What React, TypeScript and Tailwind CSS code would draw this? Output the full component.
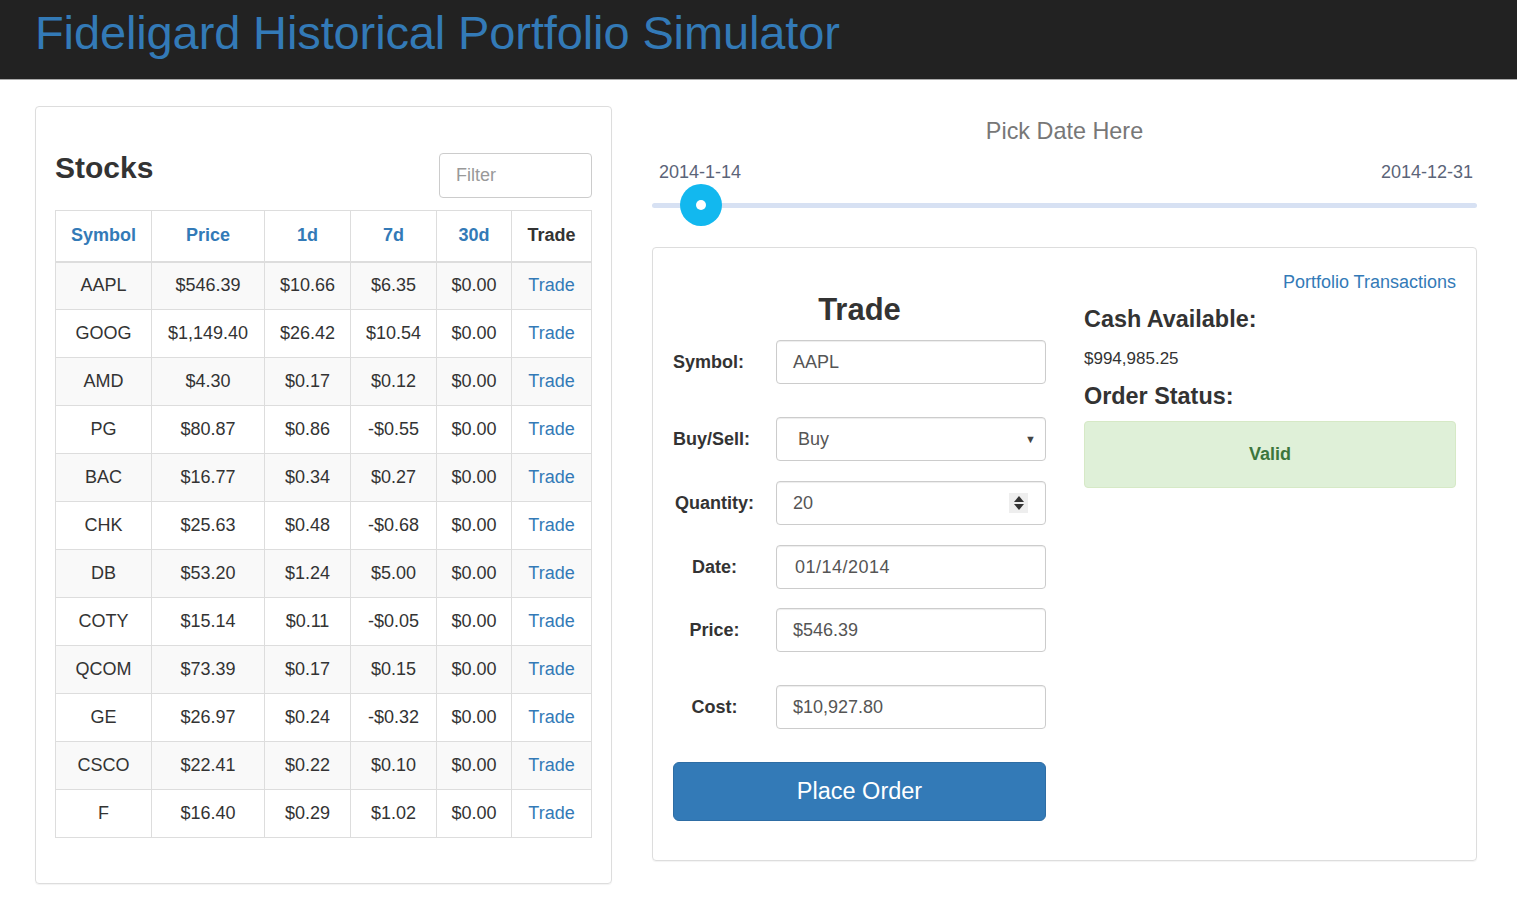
import React from "react";

type Stock = {
  symbol: string;
  price: string;
  d1: string;
  d7: string;
  d30: string;
};

const stocks: Stock[] = [
  { symbol: "AAPL", price: "$546.39", d1: "$10.66", d7: "$6.35", d30: "$0.00" },
  { symbol: "GOOG", price: "$1,149.40", d1: "$26.42", d7: "$10.54", d30: "$0.00" },
  { symbol: "AMD", price: "$4.30", d1: "$0.17", d7: "$0.12", d30: "$0.00" },
  { symbol: "PG", price: "$80.87", d1: "$0.86", d7: "-$0.55", d30: "$0.00" },
  { symbol: "BAC", price: "$16.77", d1: "$0.34", d7: "$0.27", d30: "$0.00" },
  { symbol: "CHK", price: "$25.63", d1: "$0.48", d7: "-$0.68", d30: "$0.00" },
  { symbol: "DB", price: "$53.20", d1: "$1.24", d7: "$5.00", d30: "$0.00" },
  { symbol: "COTY", price: "$15.14", d1: "$0.11", d7: "-$0.05", d30: "$0.00" },
  { symbol: "QCOM", price: "$73.39", d1: "$0.17", d7: "$0.15", d30: "$0.00" },
  { symbol: "GE", price: "$26.97", d1: "$0.24", d7: "-$0.32", d30: "$0.00" },
  { symbol: "CSCO", price: "$22.41", d1: "$0.22", d7: "$0.10", d30: "$0.00" },
  { symbol: "F", price: "$16.40", d1: "$0.29", d7: "$1.02", d30: "$0.00" },
];

const cell = "border border-[#ddd] text-center align-middle h-[48px] p-0";

const Field = ({
  label,
  children,
  className,
  left,
}: {
  label: string;
  children: React.ReactNode;
  className?: string;
  left?: boolean;
}) => (
  <div className={`flex items-center ${className ?? ""}`}>
    <label
      className={`w-[83px] mr-[20px] font-bold text-[18px] text-[#333] whitespace-nowrap ${
        left ? "text-left" : "text-center"
      }`}
    >
      {label}
    </label>
    <div className="flex-1">{children}</div>
  </div>
);

const inputCls =
  "h-[44px] w-full rounded-[4px] border border-[#ccc] px-[16px] flex items-center text-[18px] text-[#555] shadow-[inset_0_1px_1px_rgba(0,0,0,0.075)]";

const StocksPanel = () => (
  <div className="w-[577px] h-[778px] rounded-[4px] border border-[#ddd] shadow-[0_1px_1px_rgba(0,0,0,0.05)] px-[19px] pt-[46px]">
    <div className="flex items-end justify-between mb-[12px]">
      <h2 className="text-[30px] font-bold text-[#333] leading-none pb-[15px]">Stocks</h2>
      <div className="w-[153px] h-[45px] rounded-[4px] border border-[#ccc] px-[16px] flex items-center text-[18px] text-[#999]">
        Filter
      </div>
    </div>
    <table className="w-[537px] border-collapse text-[18px] text-[#333]">
      <thead>
        <tr>
          <th className={`${cell} w-[96px] !h-[51px] border-b-2 text-[#337ab7]`}>Symbol</th>
          <th className={`${cell} w-[113px] border-b-2 text-[#337ab7]`}>Price</th>
          <th className={`${cell} w-[86px] border-b-2 text-[#337ab7]`}>1d</th>
          <th className={`${cell} w-[86px] border-b-2 text-[#337ab7]`}>7d</th>
          <th className={`${cell} w-[75px] border-b-2 text-[#337ab7]`}>30d</th>
          <th className={`${cell} border-b-2 text-[#333]`}>Trade</th>
        </tr>
      </thead>
      <tbody>
        {stocks.map((s, i) => (
          <tr key={s.symbol} className={i % 2 === 0 ? "bg-[#f9f9f9]" : "bg-white"}>
            <td className={cell}>{s.symbol}</td>
            <td className={cell}>{s.price}</td>
            <td className={cell}>{s.d1}</td>
            <td className={cell}>{s.d7}</td>
            <td className={cell}>{s.d30}</td>
            <td className={`${cell} text-[#337ab7]`}>Trade</td>
          </tr>
        ))}
      </tbody>
    </table>
  </div>
);

const DateSlider = () => (
  <div className="w-[825px]">
    <div className="text-center text-[23.4px] text-[#777] leading-none pt-[14px]">Pick Date Here</div>
    <div className="flex justify-between pl-[7px] pr-[4px] mt-[20px] text-[18px] text-[#5b6478] leading-none">
      <span>2014-1-14</span>
      <span>2014-12-31</span>
    </div>
    <div className="relative h-[42px] mt-[3px] flex items-center">
      <div className="h-[5px] w-full rounded-full bg-[#d7e1f3]" />
      <div className="absolute left-[28px] top-0 w-[42px] h-[42px] rounded-full bg-[#12b8ef] flex items-center justify-center">
        <div className="w-[10px] h-[10px] rounded-full bg-white" />
      </div>
    </div>
  </div>
);

const TradePanel = () => (
  <div className="w-[825px] h-[614px] mt-[21px] rounded-[4px] border border-[#ddd] shadow-[0_1px_1px_rgba(0,0,0,0.05)] px-[20px] pt-[22px] flex gap-[38px]">
    <div className="w-[373px] pt-[24px]">
      <h2 className="text-center text-[31px] font-bold text-[#333] leading-none mb-[15px]">Trade</h2>
      <Field label="Symbol:" left>
        <div className={inputCls}>AAPL</div>
      </Field>
      <Field label="Buy/Sell:" left className="mt-[33px]">
        <div className={`${inputCls} justify-between pl-[21px] pr-[9px]`}>
          <span>Buy</span>
          <span className="text-[11px] text-[#444]">▼</span>
        </div>
      </Field>
      <Field label="Quantity:" className="mt-[20px]">
        <div className={`${inputCls} justify-between pr-[17px]`}>
          <span>20</span>
          <span className="w-[19px] h-[20px] bg-[#eee] flex flex-col items-center justify-center gap-[2px]">
            <span className="w-0 h-0 border-x-[5px] border-x-transparent border-b-[6px] border-b-[#333]" />
            <span className="w-0 h-0 border-x-[5px] border-x-transparent border-t-[6px] border-t-[#333]" />
          </span>
        </div>
      </Field>
      <Field label="Date:" className="mt-[20px]">
        <div className={`${inputCls} pl-[18px] tracking-[0.5px]`}>01/14/2014</div>
      </Field>
      <Field label="Price:" className="mt-[19px]">
        <div className={inputCls}>$546.39</div>
      </Field>
      <Field label="Cost:" className="mt-[33px]">
        <div className={inputCls}>$10,927.80</div>
      </Field>
      <button className="mt-[33px] w-full h-[59px] rounded-[6px] bg-[#337ab7] border border-[#2e6da4] text-white text-[23.5px]">
        Place Order
      </button>
    </div>
    <div className="flex-1">
      <div className="text-right text-[18px] text-[#337ab7] leading-none pt-[3px]">Portfolio Transactions</div>
      <h3 className="mt-[17px] text-[23.4px] font-bold text-[#333] leading-none">Cash Available:</h3>
      <div className="mt-[18px] text-[17px] text-[#333] leading-none">$994,985.25</div>
      <h3 className="mt-[18px] text-[23.4px] font-bold text-[#333] leading-none">Order Status:</h3>
      <div className="mt-[13px] h-[67px] rounded-[4px] bg-[#dff0d8] border border-[#d6e9c6] flex items-center justify-center text-[18px] font-bold text-[#3c763d]">
        Valid
      </div>
    </div>
  </div>
);

export default function App() {
  return (
    <div className="min-h-screen bg-white font-['Liberation_Sans',Arial,sans-serif]">
      <header className="h-[80px] bg-[#222] border-b border-[#aaa] px-[35px] pb-[14px] flex items-center">
        <h1 className="text-[47px] font-light text-[#337ab7] leading-none tracking-[-0.12px] whitespace-nowrap">
          Fideligard Historical Portfolio Simulator
        </h1>
      </header>
      <main className="flex gap-[40px] pl-[35px] pt-[26px]">
        <StocksPanel />
        <div>
          <DateSlider />
          <TradePanel />
        </div>
      </main>
    </div>
  );
}
